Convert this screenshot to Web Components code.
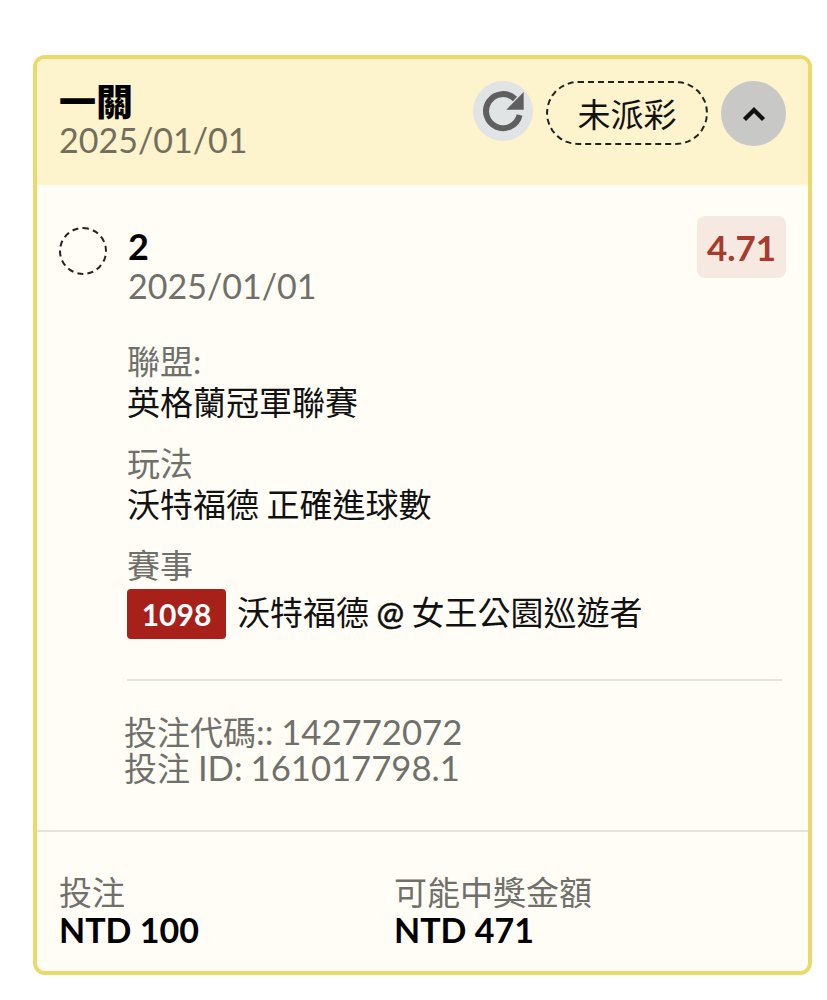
<!DOCTYPE html>
<html>
<head>
<meta charset="utf-8">
<style>
  html, body { margin: 0; background: #fff; }
  body { padding: 55px 15px 0 33px; font-family: Lato, "Noto Sans CJK TC", sans-serif; }
  .zh { font-size: 33px; }
  .at { -webkit-text-stroke: .6px #111; }
</style>
</head>
<body>
<bet-card>
  <bet-header slot="header" title="一關" date="2025/01/01" status="未派彩"></bet-header>
  <bet-leg name="2" date="2025/01/01" odds="4.71">
    <info-block label="聯盟:">英格蘭冠軍聯賽</info-block>
    <info-block label="玩法">沃特福德 正確進球數</info-block>
    <info-block label="賽事"><span slot="tag">1098</span>沃特福德 <span class="at">@</span> 女王公園巡遊者</info-block>
    <span slot="meta"><span class="zh">投注代碼</span>:: 142772072</span>
    <span slot="meta"><span class="zh">投注</span> ID: 161017798.1</span>
  </bet-leg>
  <bet-totals slot="footer" stake="NTD 100" payout="NTD 471"></bet-totals>
</bet-card>

<script>
const cardTemplate = document.createElement('template');
cardTemplate.innerHTML = `
  <style>
    :host { display: block; box-sizing: border-box; height: 920px; border: 4px solid #ecd96c; border-radius: 12px; background: #fffdf6; overflow: hidden; }
    .wrap { display: flex; flex-direction: column; height: 100%; }
    .main { flex: 1; }
  </style>
  <div class="wrap">
    <slot name="header"></slot>
    <div class="main"><slot></slot></div>
    <slot name="footer"></slot>
  </div>
`;
class BetCard extends HTMLElement {
  constructor() {
    super();
    this.attachShadow({mode: 'open'});
    this.shadowRoot.appendChild(cardTemplate.content.cloneNode(true));
  }
}
customElements.define('bet-card', BetCard);

const headerTemplate = document.createElement('template');
headerTemplate.innerHTML = `
  <style>
    :host { display: flex; box-sizing: border-box; height: 126px; padding: 22px 22px 0 22px; background: #fdf3cd; justify-content: space-between; align-items: flex-start; }
    h3 { margin: 0; font-size: 37px; line-height: 41px; font-weight: 900; color: #000; }
    .date { font-size: 34px; line-height: 36px; color: #736e5c; }
    .actions { display: flex; align-items: flex-start; gap: 13px; }
    .refresh { width: 60px; height: 60px; border-radius: 50%; background: #e1e4e4; }
    .status { box-sizing: border-box; width: 162px; height: 64px; border: 2px dashed #222; border-radius: 32px; font-size: 33px; color: #111; display: flex; align-items: center; justify-content: center; }
    .toggle { width: 65px; height: 65px; border-radius: 50%; background: #c8c8c6; display: flex; align-items: center; justify-content: center; }
    svg { display: block; }
  </style>
  <div>
    <h3></h3>
    <div class="date"></div>
  </div>
  <div class="actions">
    <div class="refresh">
      <svg width="60" height="60" viewBox="0 0 60 60">
        <path d="M46.6 34A17 17 0 1 1 42 18" fill="none" stroke="#5f5f5f" stroke-width="6"/>
        <path d="M50.7 11V28.7H33.3Z" fill="#5f5f5f"/>
      </svg>
    </div>
    <div class="status"></div>
    <div class="toggle">
      <svg width="24" height="16" viewBox="0 0 24 16">
        <path d="M2.5 13.5L12 4L21.5 13.5" fill="none" stroke="#111" stroke-width="4.4"/>
      </svg>
    </div>
  </div>
`;
class BetHeader extends HTMLElement {
  constructor() {
    super();
    this.attachShadow({mode: 'open'});
    this.shadowRoot.appendChild(headerTemplate.content.cloneNode(true));
    this.shadowRoot.querySelector('h3').textContent = this.getAttribute('title');
    this.shadowRoot.querySelector('.date').textContent = this.getAttribute('date');
    this.shadowRoot.querySelector('.status').textContent = this.getAttribute('status');
  }
}
customElements.define('bet-header', BetHeader);

const legTemplate = document.createElement('template');
legTemplate.innerHTML = `
  <style>
    :host { display: block; padding: 31px 22px 0 22px; }
    .top { display: flex; align-items: flex-start; }
    .dot { box-sizing: border-box; width: 48px; height: 48px; border: 2px dashed #222; border-radius: 50%; margin-top: 11px; margin-right: 21px; flex: none; }
    .name { font-size: 36px; line-height: 36px; font-weight: 700; color: #000; margin-top: 12px; }
    .date { font-size: 34px; line-height: 36px; margin-top: 4px; color: #70706a; }
    .odds { margin-left: auto; background: #f5e9e1; color: #a83a2e; font-size: 35px; font-weight: 700; height: 62px; width: 89px; border-radius: 8px; display: flex; align-items: center; justify-content: center; }
    .details { margin-left: 68px; margin-top: 37px; display: flex; flex-direction: column; gap: 20px; }
    hr { margin: 40px 4px 0 68px; border: 0; height: 2px; background: #e6e4dc; }
    .meta { margin: 33px 0 0 65px; font-size: 34.7px; line-height: 36px; word-spacing: -1px; color: #70706a; }
    ::slotted([slot="meta"]) { display: block; }
  </style>
  <div class="top">
    <div class="dot"></div>
    <div>
      <div class="name"></div>
      <div class="date"></div>
    </div>
    <div class="odds"></div>
  </div>
  <div class="details"><slot></slot></div>
  <hr>
  <div class="meta"><slot name="meta"></slot></div>
`;
class BetLeg extends HTMLElement {
  constructor() {
    super();
    this.attachShadow({mode: 'open'});
    this.shadowRoot.appendChild(legTemplate.content.cloneNode(true));
    this.shadowRoot.querySelector('.name').textContent = this.getAttribute('name');
    this.shadowRoot.querySelector('.date').textContent = this.getAttribute('date');
    this.shadowRoot.querySelector('.odds').textContent = this.getAttribute('odds');
  }
}
customElements.define('bet-leg', BetLeg);

const infoTemplate = document.createElement('template');
infoTemplate.innerHTML = `
  <style>
    :host { display: block; font-size: 33px; }
    .label { line-height: 41px; color: #70706a; }
    .value { display: flex; align-items: center; line-height: 41px; color: #111; min-height: 41px; word-spacing: -1px; }
    ::slotted([slot="tag"]) { background: #a8201a; color: #fff; font-weight: 700; font-size: 30px; line-height: 50px; width: 99px; text-align: center; border-radius: 4px; margin: 3px 11px 0 0; display: block; }
  </style>
  <div class="label"></div>
  <div class="value"><slot name="tag"></slot><span><slot></slot></span></div>
`;
class InfoBlock extends HTMLElement {
  constructor() {
    super();
    this.attachShadow({mode: 'open'});
    this.shadowRoot.appendChild(infoTemplate.content.cloneNode(true));
    this.shadowRoot.querySelector('.label').textContent = this.getAttribute('label');
  }
}
customElements.define('info-block', InfoBlock);

const totalsTemplate = document.createElement('template');
totalsTemplate.innerHTML = `
  <style>
    :host { display: grid; grid-template-columns: 335px 1fr; box-sizing: border-box; height: 141px; padding: 41px 22px 0 22px; border-top: 2px solid #e6e4dc; line-height: 38px; }
    .label { font-size: 33px; color: #70706a; }
    .value { font-size: 34px; color: #000; font-weight: 700; }
  </style>
  <div><div class="label">投注</div><div class="value stake"></div></div>
  <div><div class="label">可能中獎金額</div><div class="value payout"></div></div>
`;
class BetTotals extends HTMLElement {
  constructor() {
    super();
    this.attachShadow({mode: 'open'});
    this.shadowRoot.appendChild(totalsTemplate.content.cloneNode(true));
    this.shadowRoot.querySelector('.stake').textContent = this.getAttribute('stake');
    this.shadowRoot.querySelector('.payout').textContent = this.getAttribute('payout');
  }
}
customElements.define('bet-totals', BetTotals);
</script>
</body>
</html>
